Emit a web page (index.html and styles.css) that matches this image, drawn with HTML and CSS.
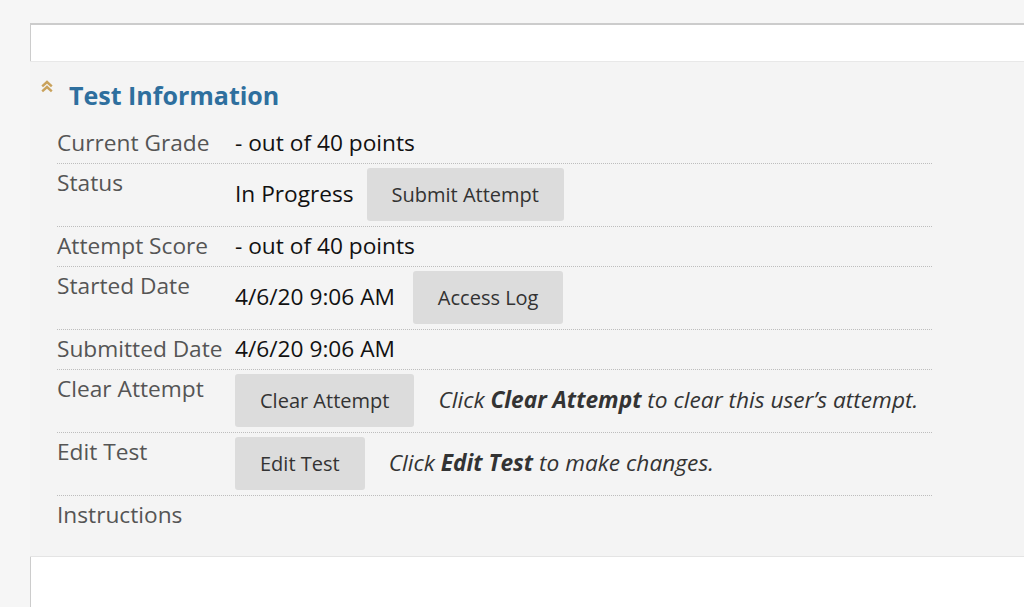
FILE: index.html
```html
<!DOCTYPE html>
<html lang="en">
<head>
  <meta charset="UTF-8">
  <title>Test Information</title>
  <link rel="stylesheet" href="styles.css">
</head>
<body>

<div class="page">
  <div class="content">

    <div class="info-panel">
      <div class="panel-head">
        <svg class="collapse-icon" width="12" height="13" viewBox="0 0 12 13">
          <polyline points="1.2,6.4 6,2 10.8,6.4" fill="none" stroke="#c9a25c" stroke-width="2.4"/>
          <polyline points="1.2,11.4 6,7 10.8,11.4" fill="none" stroke="#c9a25c" stroke-width="2.4"/>
        </svg>
        <h2>Test Information</h2>
      </div>

      <div class="info-list">
        <div class="info-row">
          <div class="label">Current Grade</div>
          <div class="value">- out of 40 points</div>
        </div>
        <div class="info-row">
          <div class="label">Status</div>
          <div class="value">In Progress <button class="btn">Submit Attempt</button></div>
        </div>
        <div class="info-row">
          <div class="label">Attempt Score</div>
          <div class="value">- out of 40 points</div>
        </div>
        <div class="info-row">
          <div class="label">Started Date</div>
          <div class="value">4/6/20 9:06 AM <button class="btn btn-wide-gap">Access Log</button></div>
        </div>
        <div class="info-row">
          <div class="label">Submitted Date</div>
          <div class="value">4/6/20 9:06 AM</div>
        </div>
        <div class="info-row">
          <div class="label">Clear Attempt</div>
          <div class="value"><button class="btn btn-first">Clear Attempt</button><span class="note">Click <b>Clear Attempt</b> to clear this user’s attempt.</span></div>
        </div>
        <div class="info-row">
          <div class="label">Edit Test</div>
          <div class="value"><button class="btn btn-first">Edit Test</button><span class="note">Click <b>Edit Test</b> to make changes.</span></div>
        </div>
        <div class="info-row last">
          <div class="label">Instructions</div>
          <div class="value"></div>
        </div>
      </div>
    </div>

  </div>
</div>

</body>
</html>
```

FILE: styles.css
```css
body {
  margin: 0;
  background: #f6f6f6;
  font-family: "Open Sans", Arial, sans-serif;
  overflow: hidden;
}
.page {
  padding: 23px 0 0 30px;
}
.content {
  background: #fff;
  border-top: 2px solid #cccccc;
  border-left: 1px solid #cccccc;
  padding-top: 36px;
  min-height: calc(100vh - 23px);
  box-sizing: border-box;
}
.info-panel {
  background: #f4f4f4;
  border-top: 1px solid #e8e8e8;
  border-bottom: 1px solid #e4e4e4;
  margin-left: -1px;
  padding: 18px 0 21px 0;
}
.panel-head {
  display: flex;
  align-items: flex-start;
}
.collapse-icon {
  margin: 0 16px 0 11px;
}
h2 {
  margin: 0;
  font-size: 25px;
  line-height: 30px;
  font-weight: bold;
  color: #2e6f9e;
}
.info-list {
  margin: 14px 0 0 27px;
  width: 875px;
}
.info-row {
  display: grid;
  grid-template-columns: 178px 1fr;
  padding: 4px 0 5px 0;
  border-bottom: 1px dotted #bdbdbd;
  font-size: 22.7px;
  line-height: 30px;
}
.info-row.last {
  border-bottom: none;
}
.label {
  color: #555;
}
.value {
  color: #111;
}
.btn {
  font-family: "Open Sans", Arial, sans-serif;
  font-size: 20px;
  line-height: 27px;
  padding: 13px 25px;
  margin-left: 7px;
  background: #dcdcdc;
  color: #333;
  border: none;
  border-radius: 3px;
}
.btn-wide-gap {
  margin-left: 12px;
}
.btn-first {
  margin-left: 0;
}
.note {
  margin-left: 24px;
  font-style: italic;
  color: #333;
}
```
